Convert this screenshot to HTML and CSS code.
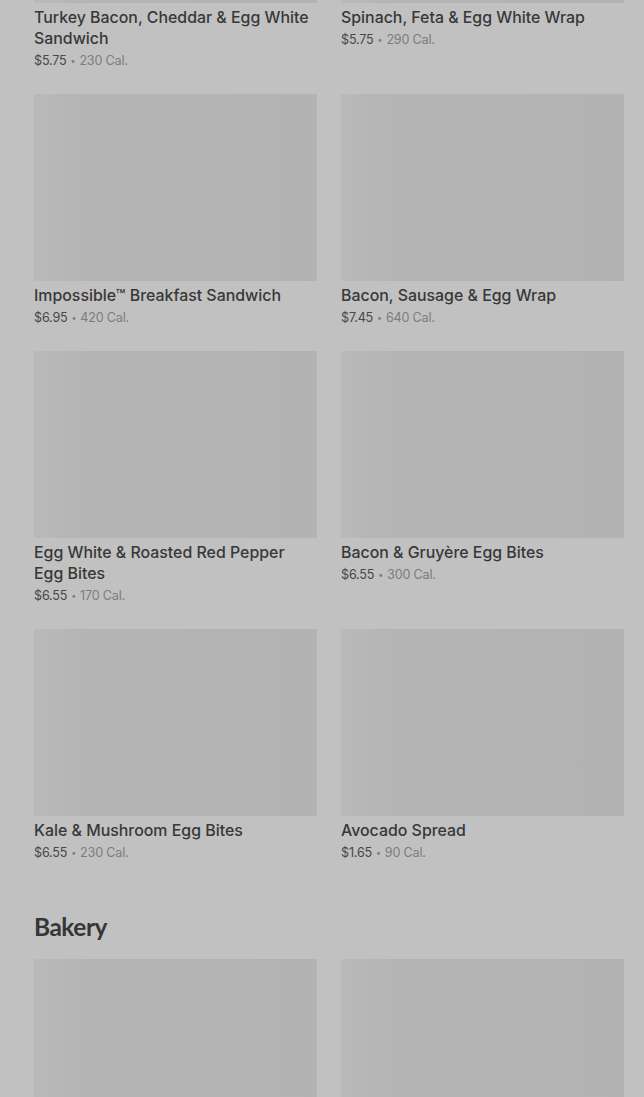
FILE: index.html
```html
<!DOCTYPE html>
<html lang="en">
<head>
    <meta charset="UTF-8">
    <meta name="viewport" content="width=device-width, initial-scale=1.0">
    <title>Menu</title>
    <link rel="stylesheet" href="styles.css">
</head>
<body>
    <div class="menu">
        <section class="category first">
            <div class="grid">
                <div class="item">
                    <div class="thumb"></div>
                    <div class="name">Turkey Bacon, Cheddar &amp; Egg White Sandwich</div>
                    <div class="meta"><span class="price">$5.75</span><span class="dot">•</span>230 Cal.</div>
                </div>
                <div class="item">
                    <div class="thumb"></div>
                    <div class="name">Spinach, Feta &amp; Egg White Wrap</div>
                    <div class="meta"><span class="price">$5.75</span><span class="dot">•</span>290 Cal.</div>
                </div>
                <div class="item">
                    <div class="thumb"></div>
                    <div class="name">Impossible™ Breakfast Sandwich</div>
                    <div class="meta"><span class="price">$6.95</span><span class="dot">•</span>420 Cal.</div>
                </div>
                <div class="item">
                    <div class="thumb"></div>
                    <div class="name">Bacon, Sausage &amp; Egg Wrap</div>
                    <div class="meta"><span class="price">$7.45</span><span class="dot">•</span>640 Cal.</div>
                </div>
                <div class="item">
                    <div class="thumb"></div>
                    <div class="name">Egg White &amp; Roasted Red Pepper Egg Bites</div>
                    <div class="meta"><span class="price">$6.55</span><span class="dot">•</span>170 Cal.</div>
                </div>
                <div class="item">
                    <div class="thumb"></div>
                    <div class="name">Bacon &amp; Gruyère Egg Bites</div>
                    <div class="meta"><span class="price">$6.55</span><span class="dot">•</span>300 Cal.</div>
                </div>
                <div class="item">
                    <div class="thumb"></div>
                    <div class="name">Kale &amp; Mushroom Egg Bites</div>
                    <div class="meta"><span class="price">$6.55</span><span class="dot">•</span>230 Cal.</div>
                </div>
                <div class="item">
                    <div class="thumb"></div>
                    <div class="name">Avocado Spread</div>
                    <div class="meta"><span class="price">$1.65</span><span class="dot">•</span>90 Cal.</div>
                </div>
            </div>
        </section>
        <section class="category">
            <h2>Bakery</h2>
            <div class="grid">
                <div class="item">
                    <div class="thumb"></div>
                </div>
                <div class="item">
                    <div class="thumb"></div>
                </div>
            </div>
        </section>
    </div>
</body>
</html>
```
FILE: styles.css
```css
body {
    margin: 0;
    background: #c1c1c1;
    font-family: Inter, "Noto Sans", sans-serif;
    overflow: hidden;
}
.menu {
    padding: 0 20px 0 34px;
}
.category.first {
    margin-top: -184px;
}
.category h2 {
    margin: 49px 0 17px;
    font-family: Lato, sans-serif;
    font-weight: 700;
    font-size: 24.5px;
    line-height: 30px;
    color: #363636;
    letter-spacing: -0.5px;
}
.grid {
    display: grid;
    grid-template-columns: 1fr 1fr;
    column-gap: 24px;
    row-gap: 23px;
}
.thumb {
    height: 187px;
    background: linear-gradient(to right, #b9b9b9, #b4b4b4 20%, #b3b3b3);
}
.name {
    margin-top: 4px;
    font-size: 15.9px;
    font-weight: 500;
    line-height: 21px;
    color: #383838;
}
.meta {
    margin-top: 2px;
    font-size: 12.6px;
    line-height: 20px;
    color: #7c7c7c;
    letter-spacing: -0.2px;
}
.price {
    color: #474747;
}
.dot {
    font-size: 9px;
    margin: 0 4px;
    vertical-align: 1px;
}
```
